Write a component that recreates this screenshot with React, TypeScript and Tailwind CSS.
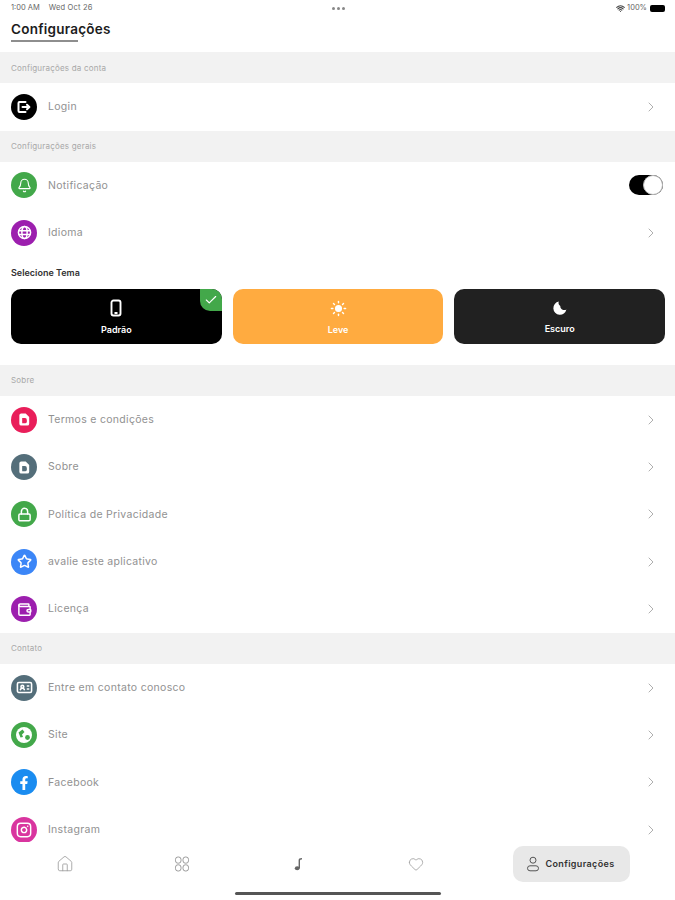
import React from "react";
import { Bell, Check, ChevronRight, Heart, House, IdCard, Instagram, Lock, Star, Sun, Wallet, Wifi } from "lucide-react";
import { FaFacebookF } from "react-icons/fa";

function Band({ title }: { title: string }) {
  return (
    <div className="h-[31px] shrink-0 flex items-center bg-[#f2f2f2] px-[11px] text-[8px] tracking-[0.2px] text-[#a8a8a8]">
      {title}
    </div>
  );
}

function Row({
  icon,
  color,
  label,
  right,
}: {
  icon: React.ReactNode;
  color: string;
  label: string;
  right?: React.ReactNode;
}) {
  return (
    <div className="h-[47.4px] shrink-0 flex items-center pl-[11px] pr-[16px]">
      <div
        className={`w-[26px] h-[26px] rounded-full flex items-center justify-center text-white ${color}`}
      >
        {icon}
      </div>
      <div className="ml-[11px] flex-1 text-[10.5px] tracking-[0.3px] text-[#919191]">
        {label}
      </div>
      {right ?? <ChevronRight size={16} strokeWidth={1.2} className="text-[#9a9a9a]" />}
    </div>
  );
}

function ThemeCard({
  icon,
  label,
  color,
  selected,
}: {
  icon: React.ReactNode;
  label: string;
  color: string;
  selected?: boolean;
}) {
  return (
    <div
      className={`relative flex-1 h-[55px] pt-[2px] rounded-[10px] overflow-hidden flex flex-col items-center justify-center text-white ${color}`}
    >
      {icon}
      <div className="mt-[6px] text-[9px] font-semibold">{label}</div>
      {selected && (
        <div className="absolute top-0 right-0 w-[22px] h-[22px] bg-[#43a84a] rounded-bl-[10px] flex items-center justify-center">
          <Check size={14} strokeWidth={2} className="text-white" />
        </div>
      )}
    </div>
  );
}

function LoginIcon() {
  return (
    <svg width="16" height="16" viewBox="0 0 16 16" fill="none" stroke="white" strokeWidth="2" strokeLinecap="round" strokeLinejoin="round">
      <path d="M9.5 3H3.5a1 1 0 0 0-1 1v8a1 1 0 0 0 1 1h6" />
      <path d="M6.5 8h6.5" />
      <path d="M11 5.8 13.4 8 11 10.2" />
    </svg>
  );
}

function GlobeIcon() {
  return (
    <svg width="15" height="15" viewBox="0 0 16 16" fill="none" stroke="white" strokeWidth="1.6">
      <circle cx="8" cy="8" r="6.5" />
      <ellipse cx="8" cy="8" rx="2.8" ry="6.5" />
      <path d="M1.8 6h12.4M1.8 10h12.4" />
    </svg>
  );
}

function DocIcon({ color }: { color: string }) {
  return (
    <svg width="15" height="15" viewBox="0 0 16 16">
      <path d="M4.5 1.5h4.8L13 5.2v7.3a2 2 0 0 1-2 2H4.5a2 2 0 0 1-2-2v-9a2 2 0 0 1 2-2z" fill="white" />
      <path d="M5.5 6.5h3a2 2 0 0 1 2 2v1.5a2 2 0 0 1-2 2h-3z" className={color} fill="currentColor" />
    </svg>
  );
}

function EarthIcon() {
  return (
    <svg width="18" height="18" viewBox="0 0 18 18">
      <circle cx="9" cy="9" r="8" fill="white" />
      <path d="M3.5 6.5 7.5 3.5 9.5 6 7 8.5 8 11 5.5 11.5z" fill="#43a84a" />
      <circle cx="12.5" cy="11.5" r="2.4" fill="#43a84a" />
    </svg>
  );
}

function PhoneIcon() {
  return (
    <svg width="16" height="18" viewBox="0 0 16 18" fill="none" stroke="white" strokeWidth="1.9">
      <rect x="3.5" y="1.5" width="9" height="15" rx="2" />
      <path d="M6.5 14h3" />
    </svg>
  );
}

function MoonIcon() {
  return (
    <svg width="16" height="16" viewBox="0 0 16 16" fill="white">
      <path d="M6.8 1.6a6.6 6.6 0 1 0 7.6 7.9 3.6 3.6 0 0 1-3 .4A3.9 3.9 0 0 1 8.3 6 3.7 3.7 0 0 1 6.8 1.6z" />
    </svg>
  );
}

function GridIcon() {
  return (
    <svg width="16" height="16" viewBox="0 0 16 16" fill="none" stroke="#9a9a9a" strokeWidth="1">
      <rect x="1.5" y="1" width="5.5" height="6.2" rx="2.4" />
      <rect x="9" y="1" width="5.5" height="6.2" rx="2.4" />
      <rect x="1.5" y="8.8" width="5.5" height="6.2" rx="2.4" />
      <rect x="9" y="8.8" width="5.5" height="6.2" rx="2.4" />
    </svg>
  );
}

function NoteIcon() {
  return (
    <svg width="12" height="14" viewBox="0 0 12 14" fill="#666666">
      <ellipse cx="4.2" cy="11.3" rx="2.4" ry="2" />
      <path d="M5.6 11.3V3.2c0-1.4 1-2.2 3.4-2.2v1.6C7.6 2.6 7 3 7 3.8v7.5z" />
    </svg>
  );
}

function UserIcon() {
  return (
    <svg width="14" height="16" viewBox="0 0 14 16" fill="none" stroke="#555555" strokeWidth="1">
      <circle cx="7" cy="4.2" r="3" />
      <rect x="1.5" y="9.8" width="11" height="5" rx="2.5" />
    </svg>
  );
}

export default function App() {
  return (
    <div className="h-[900px] w-[675px] overflow-hidden flex flex-col bg-white font-['Inter',sans-serif]">
      <div className="h-[16px] shrink-0 flex items-center justify-between pl-[11px] pr-[10px] text-[7.5px] text-[#666666]">
        <div className="w-[100px] flex gap-[9px]">
          <span>1:00 AM</span>
          <span className="tracking-[0.2px]">Wed Oct 26</span>
        </div>
        <div className="flex gap-[2px]">
          <div className="w-[3px] h-[3px] rounded-full bg-[#888888]" />
          <div className="w-[3px] h-[3px] rounded-full bg-[#888888]" />
          <div className="w-[3px] h-[3px] rounded-full bg-[#888888]" />
        </div>
        <div className="w-[100px] flex items-center justify-end gap-[2px]">
          <Wifi size={9} strokeWidth={3} className="text-[#444444]" />
          <span>100%</span>
          <div className="ml-[1px] w-[15px] h-[7px] rounded-[2px] bg-black" />
        </div>
      </div>

      <div className="h-[36.3px] shrink-0 pl-[11px]">
        <div className="w-[67px]">
          <div className="w-[110px] mt-[5px] text-[13.5px] leading-[17px] tracking-[0.25px] font-semibold text-[#1c1c1c]">
            Configurações
          </div>
          <div className="h-[2px] mt-[2px] bg-[#8e8e8e]" />
        </div>
      </div>

      <div className="flex-1 flex flex-col overflow-hidden">
        <Band title="Configurações da conta" />
        <Row color="bg-black" label="Login" icon={<LoginIcon />} />
        <Band title="Configurações gerais" />
        <Row
          color="bg-[#43a84a]"
          label="Notificação"
          icon={<Bell size={15} strokeWidth={1.8} />}
          right={
            <div className="w-[34px] h-[20px] -mr-[4px] rounded-full bg-black flex items-center justify-end">
              <div className="w-[20px] h-[20px] rounded-full bg-white border border-[#bbbbbb]" />
            </div>
          }
        />
        <Row color="bg-[#9c1fae]" label="Idioma" icon={<GlobeIcon />} />

        <div className="h-[108.5px] shrink-0 pl-[11px] pr-[10px]">
          <div className="mt-[11px] text-[9px] leading-[12px] font-semibold text-[#333333]">
            Selecione Tema
          </div>
          <div className="mt-[10px] flex gap-[11px]">
            <ThemeCard color="bg-black" label="Padrão" selected icon={<PhoneIcon />} />
            <ThemeCard color="bg-[#ffab40]" label="Leve" icon={<Sun size={17} strokeWidth={2} fill="white" />} />
            <ThemeCard color="bg-[#212121]" label="Escuro" icon={<MoonIcon />} />
          </div>
        </div>

        <Band title="Sobre" />
        <Row color="bg-[#e91e5a]" label="Termos e condições" icon={<DocIcon color="text-[#e91e5a]" />} />
        <Row color="bg-[#546e7a]" label="Sobre" icon={<DocIcon color="text-[#546e7a]" />} />
        <Row color="bg-[#43a84a]" label="Política de Privacidade" icon={<Lock size={15} strokeWidth={2.4} />} />
        <Row color="bg-[#3b86f7]" label="avalie este aplicativo" icon={<Star size={15} strokeWidth={2.4} />} />
        <Row color="bg-[#9c1fae]" label="Licença" icon={<Wallet size={15} strokeWidth={2.4} />} />
        <Band title="Contato" />
        <Row color="bg-[#546e7a]" label="Entre em contato conosco" icon={<IdCard size={17} strokeWidth={2.2} />} />
        <Row color="bg-[#43a84a]" label="Site" icon={<EarthIcon />} />
        <Row color="bg-[#1a8cf0]" label="Facebook" icon={<FaFacebookF size={14} className="mt-[2px]" />} />
        <Row color="bg-[#d9359f]" label="Instagram" icon={<Instagram size={16} strokeWidth={2.2} />} />
      </div>

      <div className="h-[58px] shrink-0 bg-white">
        <div className="h-[36px] mt-[4px] grid grid-cols-[117px_117px_117px_117px_auto] pl-[6px] items-center justify-items-center text-[#9a9a9a]">
          <House size={18} strokeWidth={1.1} />
          <GridIcon />
          <NoteIcon />
          <Heart size={16} strokeWidth={1.2} />
          <div className="justify-self-start ml-[39px] w-[117px] h-[36px] rounded-[10px] bg-[#e8e8e8] flex items-center justify-center gap-[6px] pr-[3px]">
            <UserIcon />
            <span className="text-[9px] tracking-[0.35px] font-semibold text-[#333333]">Configurações</span>
          </div>
        </div>
        <div className="w-[206px] h-[3px] mt-[10px] ml-[235px] rounded-full bg-[#555555]" />
      </div>
    </div>
  );
}
